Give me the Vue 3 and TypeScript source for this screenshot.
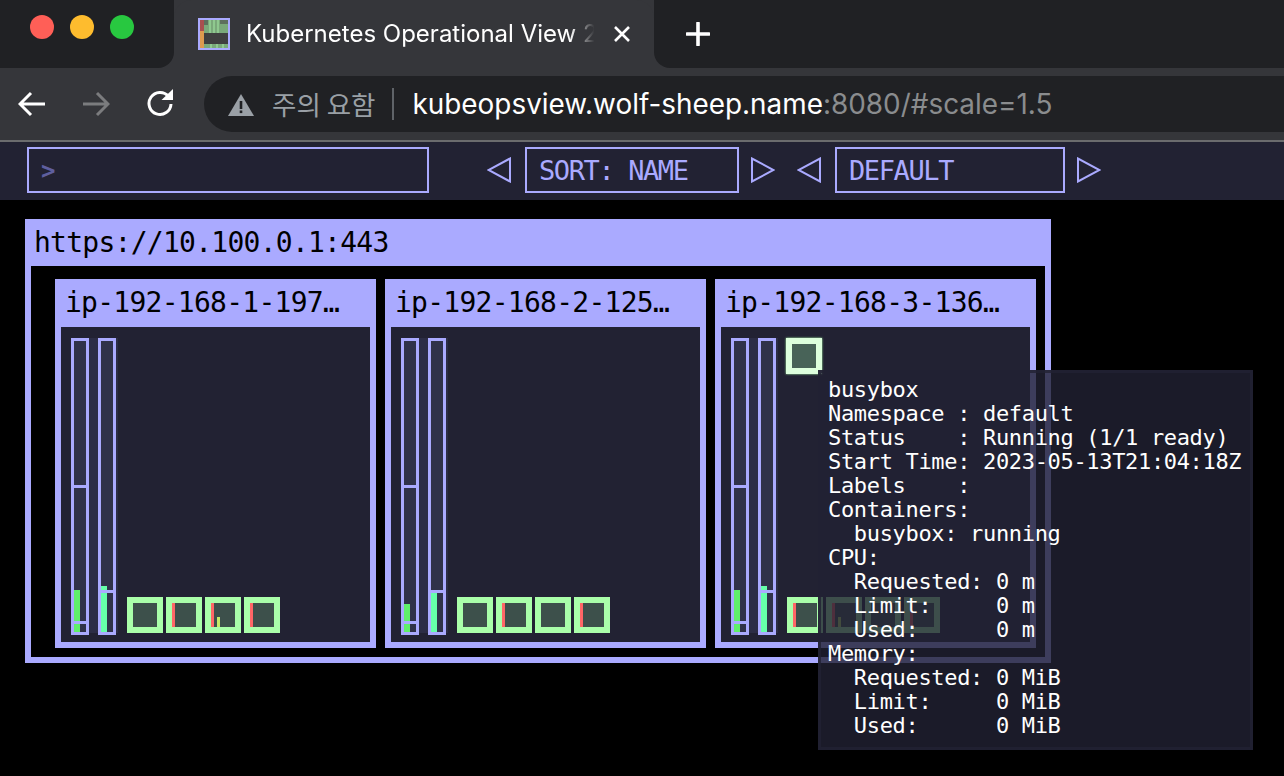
<script setup lang="ts">
interface Pod { red: boolean; used: boolean }
interface Node {
  name: string
  cpu: number
  mem: number
  memLine: number
  cpuLine: number
  pods: Pod[]
  active: boolean
}

const nodes: Node[] = [
  {
    name: 'ip-192-168-1-197…', cpu: 42, mem: 46, memLine: 8, cpuLine: 39, active: false,
    pods: [
      { red: false, used: false },
      { red: true, used: false },
      { red: true, used: true },
      { red: true, used: false },
    ],
  },
  {
    name: 'ip-192-168-2-125…', cpu: 28, mem: 39, memLine: 8, cpuLine: 39, active: false,
    pods: [
      { red: false, used: false },
      { red: true, used: false },
      { red: false, used: false },
      { red: true, used: false },
    ],
  },
  {
    name: 'ip-192-168-3-136…', cpu: 42, mem: 46, memLine: 8, cpuLine: 39, active: true,
    pods: [
      { red: true, used: false },
      { red: true, used: true },
      { red: false, used: false },
      { red: true, used: false },
    ],
  },
]

const tooltip = [
  'busybox',
  'Namespace : default',
  'Status    : Running (1/1 ready)',
  'Start Time: 2023-05-13T21:04:18Z',
  'Labels    :',
  'Containers:',
  '  busybox: running',
  'CPU:',
  '  Requested: 0 m',
  '  Limit:     0 m',
  '  Used:      0 m',
  'Memory:',
  '  Requested: 0 MiB',
  '  Limit:     0 MiB',
  '  Used:      0 MiB',
].join('\n')
</script>

<template>
  <div class="page">
    <header class="tabstrip">
      <div class="lights">
        <span class="light red"></span>
        <span class="light yellow"></span>
        <span class="light green"></span>
      </div>
      <div class="tab">
        <svg class="favicon" width="32" height="32" viewBox="0 0 32 32" shape-rendering="crispEdges">
          <rect width="32" height="32" fill="#aaaaff" />
          <rect x="2" y="2" width="28" height="28" fill="#3f3f3f" />
          <rect x="2" y="2" width="4" height="11" fill="#a94f4f" />
          <rect x="2" y="13" width="4" height="17" fill="#dd9a4e" />
          <rect x="6" y="2" width="24" height="13" fill="#7aa97a" />
          <rect x="6" y="2" width="4" height="5" fill="#5d705d" />
          <rect x="22" y="2" width="8" height="4" fill="#5d705d" />
          <rect x="11" y="2" width="2" height="13" fill="#8fc98f" />
          <rect x="15" y="2" width="2" height="13" fill="#8fc98f" />
          <rect x="19" y="2" width="2" height="13" fill="#8fc98f" />
          <rect x="6" y="26" width="24" height="4" fill="#7aa97a" />
          <rect x="12" y="26" width="2" height="4" fill="#8fc98f" />
          <rect x="18" y="26" width="2" height="4" fill="#8fc98f" />
          <rect x="24" y="26" width="2" height="4" fill="#8fc98f" />
        </svg>
        <span class="tab-title">Kubernetes Operational View 2</span>
        <svg class="tab-close" width="16" height="16" viewBox="0 0 16 16">
          <path d="M1 1 15 15M15 1 1 15" stroke="#fff" stroke-width="2.6" fill="none" />
        </svg>
      </div>
      <svg class="plus" width="24" height="24" viewBox="0 0 24 24">
        <path d="M12 1V23M1 12H23" stroke="#fff" stroke-width="3.6" stroke-linecap="round" fill="none" />
      </svg>
    </header>

    <div class="toolbar">
      <svg class="nav-icon back" width="28" height="26" viewBox="0 0 28 26">
        <path d="M27 13H3M13 2 2 13 13 24" stroke="#fff" stroke-width="3" fill="none" />
      </svg>
      <svg class="nav-icon forward" width="28" height="26" viewBox="0 0 28 26">
        <path d="M1 13H25M15 2 26 13 15 24" stroke="#7b7c7e" stroke-width="3" fill="none" />
      </svg>
      <svg class="nav-icon reload" width="28" height="28" viewBox="0 0 28 28">
        <path d="M22.5 7.5A11 11 0 1 0 25 15" stroke="#fff" stroke-width="3" fill="none" />
        <path d="M15.5 11H27V0Z" fill="#fff" />
      </svg>
      <div class="address">
        <svg class="warn" width="26" height="22" viewBox="0 0 26 22">
          <path d="M13 0 26 22H0Z" fill="#9aa0a6" />
          <rect x="11.7" y="7" width="2.6" height="8" fill="#202124" />
          <rect x="11.7" y="16.5" width="2.6" height="2.6" fill="#202124" />
        </svg>
        <span class="warn-text">주의 요함</span>
        <span class="divider"></span>
        <span class="url">kubeopsview.wolf-sheep.name<span class="url-rest">:8080/#scale=1.5</span></span>
      </div>
    </div>

    <nav class="appbar">
      <div class="search">&gt;</div>
      <svg class="arrow first" width="24" height="26" viewBox="0 0 24 26">
        <path d="M23 1.5V24.5L1.5 13Z" stroke="#aaaaff" stroke-width="2" fill="none" />
      </svg>
      <div class="select sort">SORT: NAME</div>
      <svg class="arrow" width="24" height="26" viewBox="0 0 24 26">
        <path d="M1 1.5V24.5L22.5 13Z" stroke="#aaaaff" stroke-width="2" fill="none" />
      </svg>
      <svg class="arrow second" width="24" height="26" viewBox="0 0 24 26">
        <path d="M23 1.5V24.5L1.5 13Z" stroke="#aaaaff" stroke-width="2" fill="none" />
      </svg>
      <div class="select theme">DEFAULT</div>
      <svg class="arrow" width="24" height="26" viewBox="0 0 24 26">
        <path d="M1 1.5V24.5L22.5 13Z" stroke="#aaaaff" stroke-width="2" fill="none" />
      </svg>
    </nav>

    <main class="canvas">
      <section class="cluster">
        <h2 class="cluster-title">https://10.100.0.1:443</h2>
        <div class="cluster-body">
          <article v-for="node in nodes" :key="node.name" class="node">
            <h3 class="node-title">{{ node.name }}</h3>
            <div class="node-body">
              <div class="gauges">
                <div class="gauge">
                  <span class="fill cpu" :style="{ height: node.cpu + 'px' }"></span>
                  <span class="mark top-mark"></span>
                  <span class="mark" :style="{ bottom: node.memLine + 'px' }"></span>
                </div>
                <div class="gauge">
                  <span class="fill mem" :style="{ height: node.mem + 'px' }"></span>
                  <span class="mark" :style="{ bottom: node.cpuLine + 'px' }"></span>
                </div>
              </div>
              <div class="pods">
                <div class="pod-row top">
                  <div v-if="node.active" class="pod hot"></div>
                </div>
                <div class="pod-row">
                  <div v-for="(pod, i) in node.pods" :key="i" class="pod">
                    <span v-if="pod.red" class="pod-red"></span>
                    <span v-if="pod.used" class="pod-used"></span>
                  </div>
                </div>
              </div>
            </div>
          </article>
        </div>
      </section>
    </main>

    <pre class="tooltip">{{ tooltip }}</pre>
  </div>
</template>

<style>
html,
body {
  margin: 0;
  background: #000;
  overflow: hidden;
}
</style>

<style scoped>
.page {
  position: relative;
  width: 1284px;
  height: 776px;
  overflow: hidden;
  background: #000;
  font-family: "DejaVu Sans Mono", "Liberation Mono", monospace;
}

.tabstrip {
  display: flex;
  align-items: stretch;
  height: 68px;
  background: #35363a;
}
.lights {
  display: flex;
  gap: 16px;
  width: 174px;
  box-sizing: border-box;
  padding: 15px 0 0 30px;
  background: #202124;
  border-bottom-right-radius: 16px;
}
.light {
  width: 24px;
  height: 24px;
  border-radius: 50%;
}
.red { background: #ff5f57; }
.yellow { background: #febc2e; }
.green { background: #28c840; }

.tab {
  display: flex;
  align-items: center;
  width: 480px;
  box-sizing: border-box;
  padding: 0 24px;
  background: #35363a;
  border-radius: 18px 18px 0 0;
}
.favicon { flex: none; }
.tab-title {
  flex: none;
  margin-left: 16px;
  white-space: nowrap;
  color: #fff;
  font: 24px/34px Inter, "Noto Sans", sans-serif;
  -webkit-mask-image: linear-gradient(90deg, #000 92%, transparent 99%);
  mask-image: linear-gradient(90deg, #000 92%, transparent 99%);
}
.tab-close {
  flex: none;
  margin-left: auto;
}
.plus {
  position: absolute;
  left: 686px;
  top: 22px;
}
.tabstrip::after {
  content: "";
  flex: 1;
  background: #202124;
  border-bottom-left-radius: 16px;
}

.toolbar {
  display: flex;
  align-items: center;
  height: 72px;
  box-sizing: border-box;
  background: #35363a;
  padding: 8px 0;
}
.nav-icon { flex: none; }
.back { margin-left: 18px; }
.forward { margin-left: 36px; }
.reload { margin-left: 36px; margin-top: -2px; }
.address {
  display: flex;
  flex: 1;
  align-items: center;
  height: 56px;
  margin-left: 30px;
  padding-left: 24px;
  background: #202124;
  border-radius: 28px 0 0 28px;
}
.warn { flex: none; margin-top: 1px; }
.warn-text {
  margin-left: 18px;
  color: #9aa0a6;
  font: 26.5px/36px "Noto Sans CJK KR", sans-serif;
  white-space: nowrap;
}
.divider {
  width: 2px;
  height: 32px;
  margin: 0 18px 0 17px;
  background: #5f6368;
}
.url {
  color: #fff;
  font: 27.9px/36px Inter, "Noto Sans", sans-serif;
  white-space: nowrap;
}
.url-rest { color: #8a8c8e; }

.appbar {
  display: flex;
  align-items: flex-start;
  height: 60px;
  box-sizing: border-box;
  padding: 5px 0 0 27px;
  background: #222233;
  border-top: 2px solid #6b6c6e;
}
.search,
.select {
  height: 46px;
  box-sizing: border-box;
  border: 2px solid #aaaaff;
}
.search {
  width: 402px;
  padding-left: 12px;
  color: #5f5f9f;
  font-size: 24px;
  line-height: 44px;
  font-weight: 700;
}
.select {
  padding-left: 12px;
  color: #aaaaff;
  font-size: 27px;
  line-height: 44px;
  letter-spacing: -1.4px;
  white-space: nowrap;
}
.sort { width: 214px; margin: 0 12px 0 14px; }
.theme { width: 230px; margin: 0 12px 0 14px; }
.arrow { flex: none; margin-top: 10px; }
.first { margin-left: 58px; }
.second { margin-left: 22px; }

.canvas {
  padding: 19px 0 0 25px;
}
.cluster {
  width: 1026px;
  box-sizing: border-box;
  padding: 0 6px 6px;
  background: #aaaaff;
}
.cluster-title,
.node-title {
  margin: 0;
  color: #000;
  font-weight: 400;
  font-size: 28px;
  letter-spacing: -0.74px;
  white-space: nowrap;
}
.cluster-title {
  height: 47px;
  padding-left: 3px;
  line-height: 47px;
}
.cluster-body {
  display: flex;
  gap: 9px;
  height: 391px;
  box-sizing: border-box;
  padding: 13px 0 0 24px;
  background: #000;
}
.node {
  width: 321px;
  height: 369px;
  box-sizing: border-box;
  padding: 0 6px 6px;
  background: #aaaaff;
}
.node-title {
  height: 48px;
  padding-left: 4px;
  line-height: 48px;
}
.node-body {
  display: flex;
  height: 315px;
  box-sizing: border-box;
  padding: 11px 0 0 10px;
  background: #222233;
}
.gauges {
  display: flex;
  gap: 9px;
  width: 47px;
  height: 295px;
  background: #2c2d45;
}
.gauge {
  position: relative;
  flex: none;
  width: 18px;
  height: 297px;
  box-sizing: border-box;
  border: 3px solid #aaaaff;
  background: #30324a;
}
.fill {
  position: absolute;
  left: 0;
  bottom: 0;
  width: 6px;
}
.fill.cpu { background: #5ff06a; }
.fill.mem { background: #66ffaa; }
.mark {
  position: absolute;
  left: 0;
  right: 0;
  height: 3px;
  background: #aaaaff;
}
.top-mark { top: 144px; }

.pods {
  display: flex;
  flex-direction: column;
  justify-content: space-between;
  height: 295px;
  margin-left: 9px;
}
.pod-row {
  display: flex;
  gap: 3px;
}
.pod-row.top { margin-left: -1px; }
.pod {
  position: relative;
  width: 36px;
  height: 36px;
  box-sizing: border-box;
  border: 6px solid #aaffaa;
  background: #3d504b;
}
.pod.hot {
  border-color: #ddffdd;
  background: #486358;
  box-shadow: 0 0 2px #aaffaa;
}
.pod-red {
  position: absolute;
  left: 0;
  top: 0;
  bottom: 0;
  width: 3px;
  background: #ff6666;
}
.pod-used {
  position: absolute;
  left: 6px;
  bottom: 0;
  width: 3px;
  height: 10px;
  background: #c4ee66;
}

.tooltip {
  position: absolute;
  left: 818px;
  top: 370px;
  width: 435px;
  height: 380px;
  box-sizing: border-box;
  margin: 0;
  padding: 5px 0 0 7px;
  border: 3px solid rgba(34, 34, 51, 0.8);
  background: rgba(34, 34, 51, 0.8);
  color: #fff;
  font-family: "DejaVu Sans Mono", "Liberation Mono", monospace;
  font-size: 22px;
  line-height: 24px;
  letter-spacing: -0.33px;
  white-space: pre;
}
</style>
